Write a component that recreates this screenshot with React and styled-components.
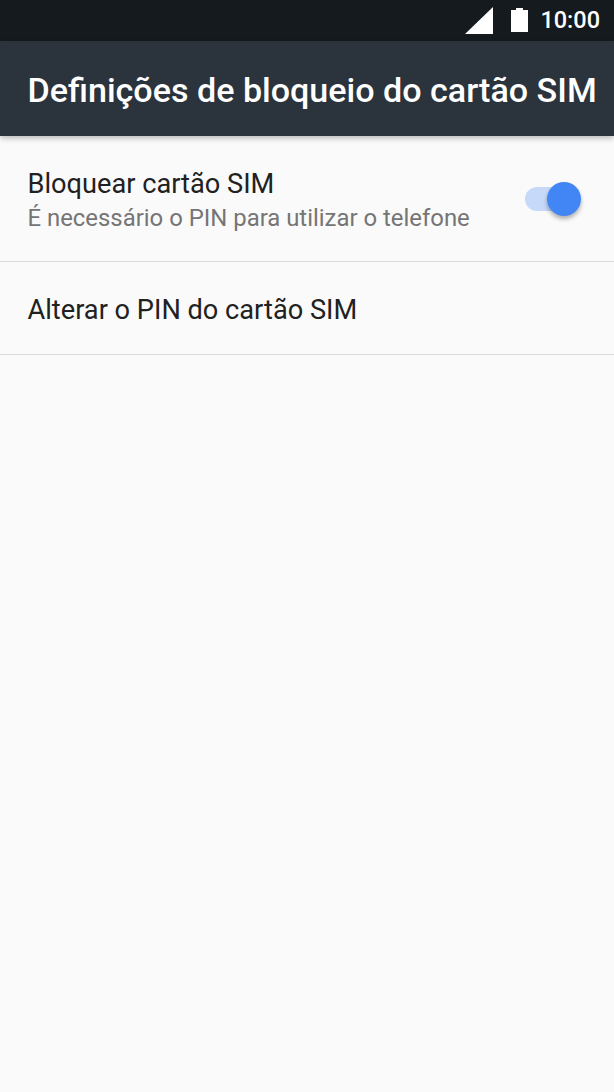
import React from 'react'
import styled, { createGlobalStyle } from 'styled-components'

const Global = createGlobalStyle`
    html, body {
        margin:0;
        padding:0;
        background-color:#fafafa;
    }
    * {
        box-sizing:border-box;
    }
`;
const Page = styled.div`
    width:614px;
    height:1092px;
    overflow:hidden;
    background-color:#fafafa;
    font-family:Roboto, "Liberation Sans", sans-serif;
`;
const StatusBar = styled.div`
    height:41px;
    background-color:#141a1e;
    display:flex;
    justify-content:flex-end;
    align-items:center;
    padding-right:14px;
`;
const Signal = styled.svg`
    width:28px;
    height:28px;
    margin-right:18px;
    margin-top:-1px;
`;
const Battery = styled.svg`
    width:17px;
    height:24px;
    margin-right:12px;
    margin-top:-1px;
`;
const Clock = styled.div`
    color:#ffffff;
    font-size:23.5px;
    font-weight:500;
    line-height:41px;
`;
const AppBar = styled.div`
    height:95px;
    background-color:#2b343d;
    color:#ffffff;
    font-size:34.1px;
    font-weight:500;
    display:flex;
    align-items:center;
    padding:2px 0 0 27.5px;
    white-space:nowrap;
    box-shadow:0 2px 6px rgba(0,0,0,0.28);
    position:relative;
`;
const Row = styled.div`
    height:${props => props.tall ? '126px' : '93px'};
    border-bottom:1px solid #dcdcdc;
    display:flex;
    align-items:center;
    justify-content:space-between;
    padding:${props => props.tall ? '5px' : '3px'} 42px 0 27.5px;
`;
const Title = styled.div`
    font-size:27.2px;
    line-height:34px;
    color:#212121;
`;
const Subtitle = styled.div`
    font-size:23.9px;
    line-height:34px;
    color:#757575;
`;
const SwitchTrack = styled.div`
    width:48px;
    height:24px;
    border-radius:12px;
    background-color:#c6d9f9;
    position:relative;
    margin-right:-1px;
    margin-top:-5px;
`;
const SwitchThumb = styled.div`
    width:34px;
    height:34px;
    border-radius:50%;
    background-color:#4285f4;
    position:absolute;
    right:-8px;
    top:-5px;
    box-shadow:0 3px 4px rgba(0,0,0,0.3);
`;

export default function App() {
    return (
        <Page>
            <Global />
            <StatusBar>
                <Signal viewBox="0 0 28 28">
                    <path d="M0 28 L28 1 L28 28 Z" fill="#ffffff" />
                </Signal>
                <Battery viewBox="0 0 17 24">
                    <path d="M5 2 V0 H12 V2 H17 V24 H0 V2 Z" fill="#ffffff" />
                </Battery>
                <Clock>10:00</Clock>
            </StatusBar>
            <AppBar>Definições de bloqueio do cartão SIM</AppBar>
            <Row tall>
                <div>
                    <Title>Bloquear cartão SIM</Title>
                    <Subtitle>É necessário o PIN para utilizar o telefone</Subtitle>
                </div>
                <SwitchTrack>
                    <SwitchThumb />
                </SwitchTrack>
            </Row>
            <Row>
                <Title>Alterar o PIN do cartão SIM</Title>
            </Row>
        </Page>
    )
}
